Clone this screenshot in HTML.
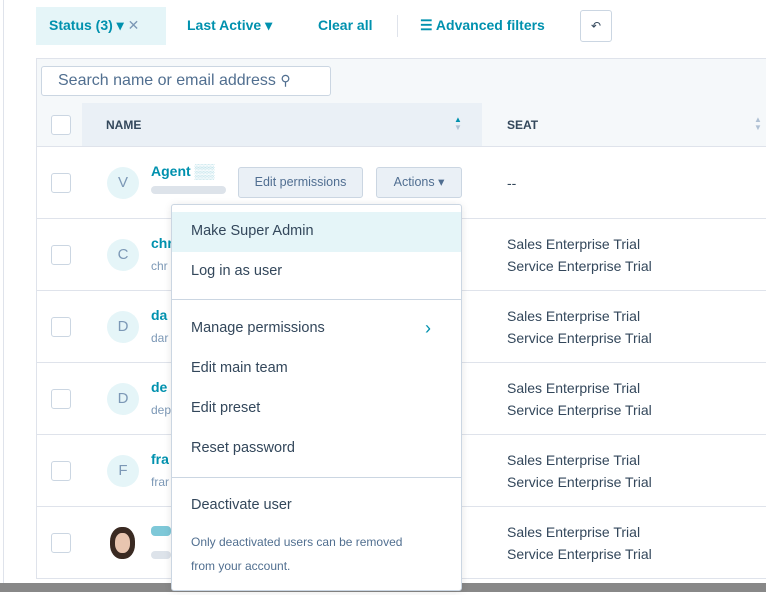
<!DOCTYPE html>
<html><head><style>
*{box-sizing:border-box;margin:0;padding:0}
body{width:766px;height:595px;overflow:hidden;background:#fff;font-family:"Liberation Sans",sans-serif;position:relative;color:#33475b}
.a{position:absolute}
.cb{position:absolute;left:51px;width:20px;height:20px;border:1px solid #cbd6e2;border-radius:3px;background:#fff}
.av{position:absolute;left:107px;width:32px;height:32px;border-radius:50%;background:#e5f5f8;color:#7c98b6;font-size:15px;text-align:center;line-height:32px}
.nm{position:absolute;left:151px;color:#0091ae;font-weight:bold;font-size:14px}
.em{position:absolute;left:151px;color:#7c98b6;font-size:12px}
.seat{position:absolute;left:507px;font-size:14px;line-height:22px;color:#33475b}
.hr{position:absolute;left:37px;right:0;height:1px;background:#dfe3eb}
.mi{position:absolute;left:191px;font-size:14.5px;color:#33475b}
</style></head><body>
<div class="a" style="left:3px;top:0;width:1px;height:583px;background:#dfe3eb"></div>
<div class="a" style="left:36px;top:7px;width:130px;height:38px;background:#e5f5f8"></div>
<div class="a" style="left:49px;top:17px;font-size:14px;font-weight:bold;color:#0091ae">Status (3) ▾ <span style="font-weight:normal;color:#7c98b6">✕</span></div>
<div class="a" style="left:187px;top:17px;font-size:14px;font-weight:bold;color:#0091ae">Last Active ▾</div>
<div class="a" style="left:318px;top:17px;font-size:14px;font-weight:bold;color:#0091ae">Clear all</div>
<div class="a" style="left:397px;top:15px;width:1px;height:22px;background:#dfe3eb"></div>
<div class="a" style="left:420px;top:17px;font-size:14px;font-weight:bold;color:#0091ae">☰ Advanced filters</div>
<div class="a" style="left:580px;top:10px;width:32px;height:32px;border:1px solid #cbd6e2;border-radius:3px;font-size:12px;text-align:center;line-height:30px">↶</div>
<div class="a" style="left:36px;top:58px;width:730px;height:45px;background:#f5f8fa;border-top:1px solid #dfe3eb;border-left:1px solid #dfe3eb"></div>
<div class="a" style="left:41px;top:66px;width:290px;height:30px;background:#fff;border:1px solid #cbd6e2;border-radius:3px;font-size:16px;color:#516f90;padding:5px 16px">Search name or email address <span style="font-size:14px">⚲</span></div>
<div class="a" style="left:36px;top:103px;width:730px;height:44px;background:#f5f8fa;border-left:1px solid #dfe3eb"></div>
<div class="a" style="left:82px;top:103px;width:400px;height:44px;background:#eaf0f6"></div>
<div class="cb" style="top:115px"></div>
<div class="a" style="left:106px;top:118px;font-size:12px;font-weight:bold">NAME</div>
<div class="a" style="left:454px;top:116px;font-size:8px;line-height:8px;color:#0091ae">▲<br><span style="color:#b0c1d4">▼</span></div>
<div class="a" style="left:507px;top:118px;font-size:12px;font-weight:bold">SEAT</div>
<div class="a" style="left:754px;top:116px;font-size:8px;line-height:8px;color:#b0c1d4">▲<br>▼</div>
<div class="a" style="left:36px;top:147px;width:1px;height:432px;background:#dfe3eb"></div>
<div class="hr" style="top:146px"></div>
<div class="hr" style="top:218px"></div><div class="hr" style="top:290px"></div><div class="hr" style="top:362px"></div><div class="hr" style="top:434px"></div><div class="hr" style="top:506px"></div><div class="hr" style="top:578px"></div>
<div class="a" style="left:0;top:583px;width:766px;height:9px;background:#888"></div>
<div class="cb" style="top:173px"></div><div class="av" style="top:167px">V</div>
<div class="nm" style="top:163px">Agent <span style="color:#9fd4e0">▒▒</span></div>
<div class="a" style="left:151px;top:186px;width:75px;height:8px;background:#dde3ea;border-radius:4px"></div>
<div class="a" style="left:238px;top:167px;width:125px;height:31px;background:#eaf0f6;border:1px solid #cbd6e2;border-radius:3px;font-size:12.5px;text-align:center;line-height:29px;color:#506e91">Edit permissions</div>
<div class="a" style="left:376px;top:167px;width:86px;height:31px;background:#eaf0f6;border:1px solid #cbd6e2;border-radius:3px;font-size:12.5px;text-align:center;line-height:29px;color:#506e91">Actions ▾</div>
<div class="a" style="left:507px;top:175px;font-size:14px">--</div>
<div class="cb" style="top:245px"></div><div class="av" style="top:239px">C</div><div class="nm" style="top:235px">chr</div><div class="em" style="top:259px">chr</div>
<div class="seat" style="top:233px">Sales Enterprise Trial<br>Service Enterprise Trial</div>
<div class="cb" style="top:317px"></div><div class="av" style="top:311px">D</div><div class="nm" style="top:307px">da</div><div class="em" style="top:331px">dar</div>
<div class="seat" style="top:305px">Sales Enterprise Trial<br>Service Enterprise Trial</div>
<div class="cb" style="top:389px"></div><div class="av" style="top:383px">D</div><div class="nm" style="top:379px">de</div><div class="em" style="top:403px">dep</div>
<div class="seat" style="top:377px">Sales Enterprise Trial<br>Service Enterprise Trial</div>
<div class="cb" style="top:461px"></div><div class="av" style="top:455px">F</div><div class="nm" style="top:451px">fra</div><div class="em" style="top:475px">frar</div>
<div class="seat" style="top:449px">Sales Enterprise Trial<br>Service Enterprise Trial</div>
<div class="cb" style="top:533px"></div>
<div class="a" style="left:110px;top:527px;width:25px;height:32px;border-radius:45%;background:#3a2a22"></div>
<div class="a" style="left:115px;top:533px;width:15px;height:20px;border-radius:45%;background:#e8c5b0"></div>
<div class="a" style="left:151px;top:526px;width:20px;height:10px;background:#7ec8d8;border-radius:4px"></div>
<div class="a" style="left:151px;top:551px;width:20px;height:8px;background:#dde3ea;border-radius:4px"></div>
<div class="seat" style="top:521px">Sales Enterprise Trial<br>Service Enterprise Trial</div>
<div class="a" style="left:171px;top:204px;width:291px;height:387px;background:#fff;border:1px solid #cbd6e2;border-radius:3px;box-shadow:0 1px 8px rgba(0,0,0,.1)"></div>
<div class="a" style="left:172px;top:212px;width:289px;height:40px;background:#e5f5f8"></div>
<div class="mi" style="top:223px">Make Super Admin</div>
<div class="mi" style="top:263px">Log in as user</div>
<div class="a" style="left:172px;top:299px;width:289px;height:1px;background:#cbd6e2"></div>
<div class="mi" style="top:320px">Manage permissions</div>
<div class="a" style="left:425px;top:318px;font-size:18px;color:#0091ae">›</div>
<div class="mi" style="top:360px">Edit main team</div>
<div class="mi" style="top:400px">Edit preset</div>
<div class="mi" style="top:440px">Reset password</div>
<div class="a" style="left:172px;top:477px;width:289px;height:1px;background:#cbd6e2"></div>
<div class="mi" style="top:497px">Deactivate user</div>
<div class="a" style="left:191px;top:530px;font-size:12px;line-height:24px;color:#516f90">Only deactivated users can be removed<br>from your account.</div>
</body></html>
